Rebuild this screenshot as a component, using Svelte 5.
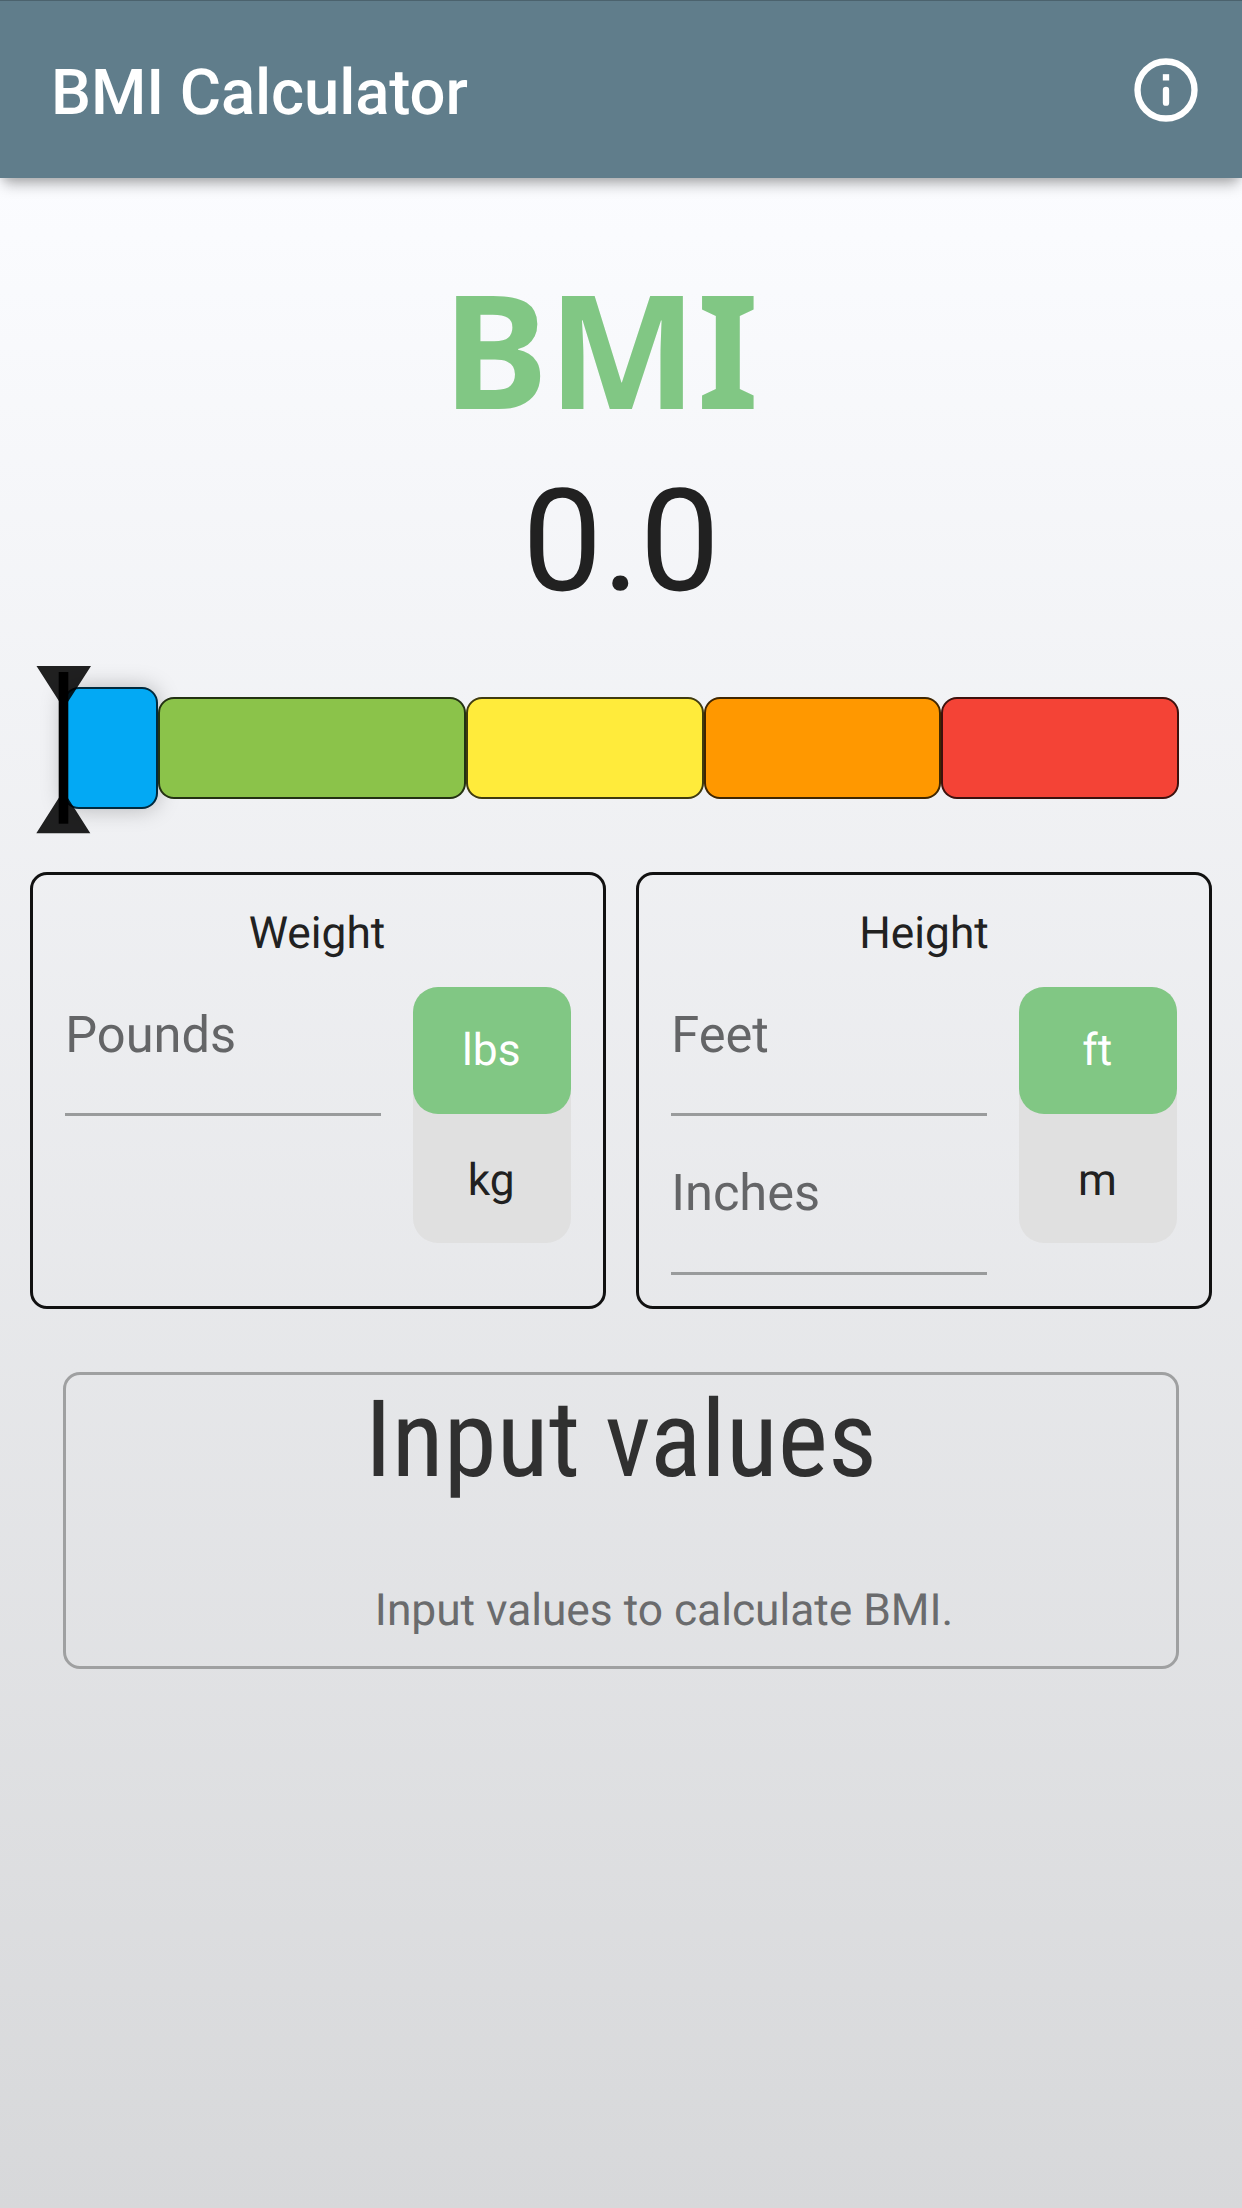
<script>
  const segments = [
    { name: 'under', width: 94.8 },
    { name: 'normal', width: 308 },
    { name: 'over', width: 237.4 },
    { name: 'obese', width: 237.5 },
    { name: 'severe', width: 237.5 }
  ];
  const cards = [
    { title: 'Weight', fields: ['Pounds'], units: ['lbs', 'kg'] },
    { title: 'Height', fields: ['Feet', 'Inches'], units: ['ft', 'm'] }
  ];
</script>

<div class="screen">
  <header>
    <h1>BMI Calculator</h1>
    <svg class="info" viewBox="0 0 24 24" aria-label="Info">
      <circle cx="12" cy="12" r="9" fill="none" stroke="#fff" stroke-width="2" />
      <rect x="11" y="7" width="2" height="2" fill="#fff" />
      <rect x="11" y="11" width="2" height="6" rx="1" fill="#fff" />
    </svg>
  </header>

  <main>
    <div class="label">BMI&nbsp;</div>
    <div class="value">0.0</div>

    <div class="gauge">
      {#each segments as s}
        <div class="segment {s.name}" style="width: {s.width}px"></div>
      {/each}
      <svg class="marker" viewBox="0 0 56 168">
        <path d="M0.5 0H55L27.7 42.5Z M0.3 167.2H54.3L27.3 124.7Z" fill="#000" fill-opacity=".87" />
        <rect x="22.7" y="6" width="9.6" height="151.7" fill="#000" />
      </svg>
    </div>

    <div class="cards">
      {#each cards as card}
        <section class="card">
          <h2>{card.title}</h2>
          <div class="body">
            <div class="fields">
              {#each card.fields as field}
                <div class="field">{field}</div>
              {/each}
            </div>
            <div class="toggle">
              <div class="unit on">{card.units[0]}</div>
              <div class="unit">{card.units[1]}</div>
            </div>
          </div>
        </section>
      {/each}
    </div>

    <section class="result">
      <div class="headline">Input values</div>
      <p>Input values to calculate BMI.</p>
    </section>
  </main>
</div>

<style>
  :global(body) {
    margin: 0;
  }
  .screen {
    box-sizing: border-box;
    width: 1242px;
    height: 2208px;
    overflow: hidden;
    font-family: Roboto, 'Liberation Sans', sans-serif;
    text-rendering: geometricPrecision;
    color: #212121;
  }
  header {
    box-sizing: border-box;
    position: relative;
    height: 178px;
    padding: 1px 38px 0 51px;
    display: flex;
    align-items: center;
    justify-content: space-between;
    background: #607d8b;
    border-top: 1px solid #4b626d;
    box-shadow: 0 10px 13px -4px rgba(0, 0, 0, 0.3), 0 4px 6px -1px rgba(0, 0, 0, 0.06);
  }
  h1 {
    margin: 0;
    padding-top: 8px;
    font-size: 63.36px;
    line-height: 1;
    font-weight: 500;
    letter-spacing: -0.1px;
    color: #fff;
  }
  .info {
    width: 76px;
    height: 76px;
  }
  main {
    box-sizing: border-box;
    height: 2030px;
    padding-top: 91px;
    background: linear-gradient(#fbfcff, #d7d8da);
  }
  .label {
    font: 700 158.4px/160px 'Noto Sans', sans-serif;
    letter-spacing: -0.2px;
    text-align: center;
    color: #81c784;
  }
  .value {
    margin-top: 42px;
    font-size: 142.5px;
    line-height: 142px;
    text-align: center;
  }
  .gauge {
    box-sizing: border-box;
    position: relative;
    height: 168px;
    margin: 53px 63.4px 0;
    padding-bottom: 4px;
    display: flex;
    align-items: center;
  }
  .segment {
    box-sizing: border-box;
    height: 102px;
    flex: none;
    border: 2px solid rgba(0, 0, 0, 0.75);
    border-radius: 16px;
  }
  .segment.under {
    height: 122px;
    background: #03a9f4;
    box-shadow: 0 0 22px rgba(0, 0, 0, 0.25);
  }
  .normal { background: #8bc34a; }
  .over { background: #ffeb3b; }
  .obese { background: #ff9800; }
  .severe { background: #f44336; }
  .marker {
    position: absolute;
    left: -27.4px;
    top: 0;
    width: 56px;
    height: 168px;
  }
  .cards {
    display: grid;
    grid-template-columns: 1fr 1fr;
    gap: 30.4px;
    margin: 38px 30.2px 0;
  }
  .card {
    box-sizing: border-box;
    height: 436.5px;
    padding: 36px 32px 0;
    border: 3px solid #111;
    border-radius: 17px;
  }
  h2 {
    margin: 0;
    font-size: 44.3px;
    line-height: 44px;
    font-weight: 400;
    text-align: center;
  }
  .card:first-child h2 {
    padding-right: 2px;
  }
  .body {
    display: flex;
    justify-content: space-between;
    padding-top: 32.4px;
  }
  .fields {
    width: 316px;
    margin-top: -29.4px;
  }
  .field {
    box-sizing: border-box;
    height: 158.4px;
    padding-top: 52px;
    border-bottom: 3px solid #999b9c;
    font-size: 50.6px;
    line-height: 51px;
    color: #646567;
  }
  .toggle {
    width: 158px;
    height: 256px;
    border-radius: 25px;
    background: #e0e0e0;
  }
  .unit {
    box-sizing: border-box;
    height: 126.6px;
    padding: 41px 1px 0 0;
    font-size: 44.3px;
    line-height: 44px;
    text-align: center;
  }
  .unit + .unit {
    padding-top: 44.4px;
  }
  .unit.on {
    border-radius: 25px;
    color: #fff;
    background: #81c784;
  }
  .result {
    box-sizing: border-box;
    height: 297px;
    margin: 63px 63.4px 0;
    border: 3px solid #9fa0a1;
    border-radius: 17px;
  }
  .headline {
    padding-top: 12px;
    font-family: 'Roboto Condensed', Roboto, sans-serif;
    font-stretch: condensed;
    font-size: 107px;
    line-height: 107px;
    letter-spacing: 0.1px;
    text-align: center;
    color: #303030;
  }
  p {
    margin: 94px 0 0;
    padding-left: 86px;
    font-size: 44.35px;
    line-height: 44px;
    letter-spacing: -0.04px;
    text-align: center;
    color: #6a6b6d;
  }
</style>
